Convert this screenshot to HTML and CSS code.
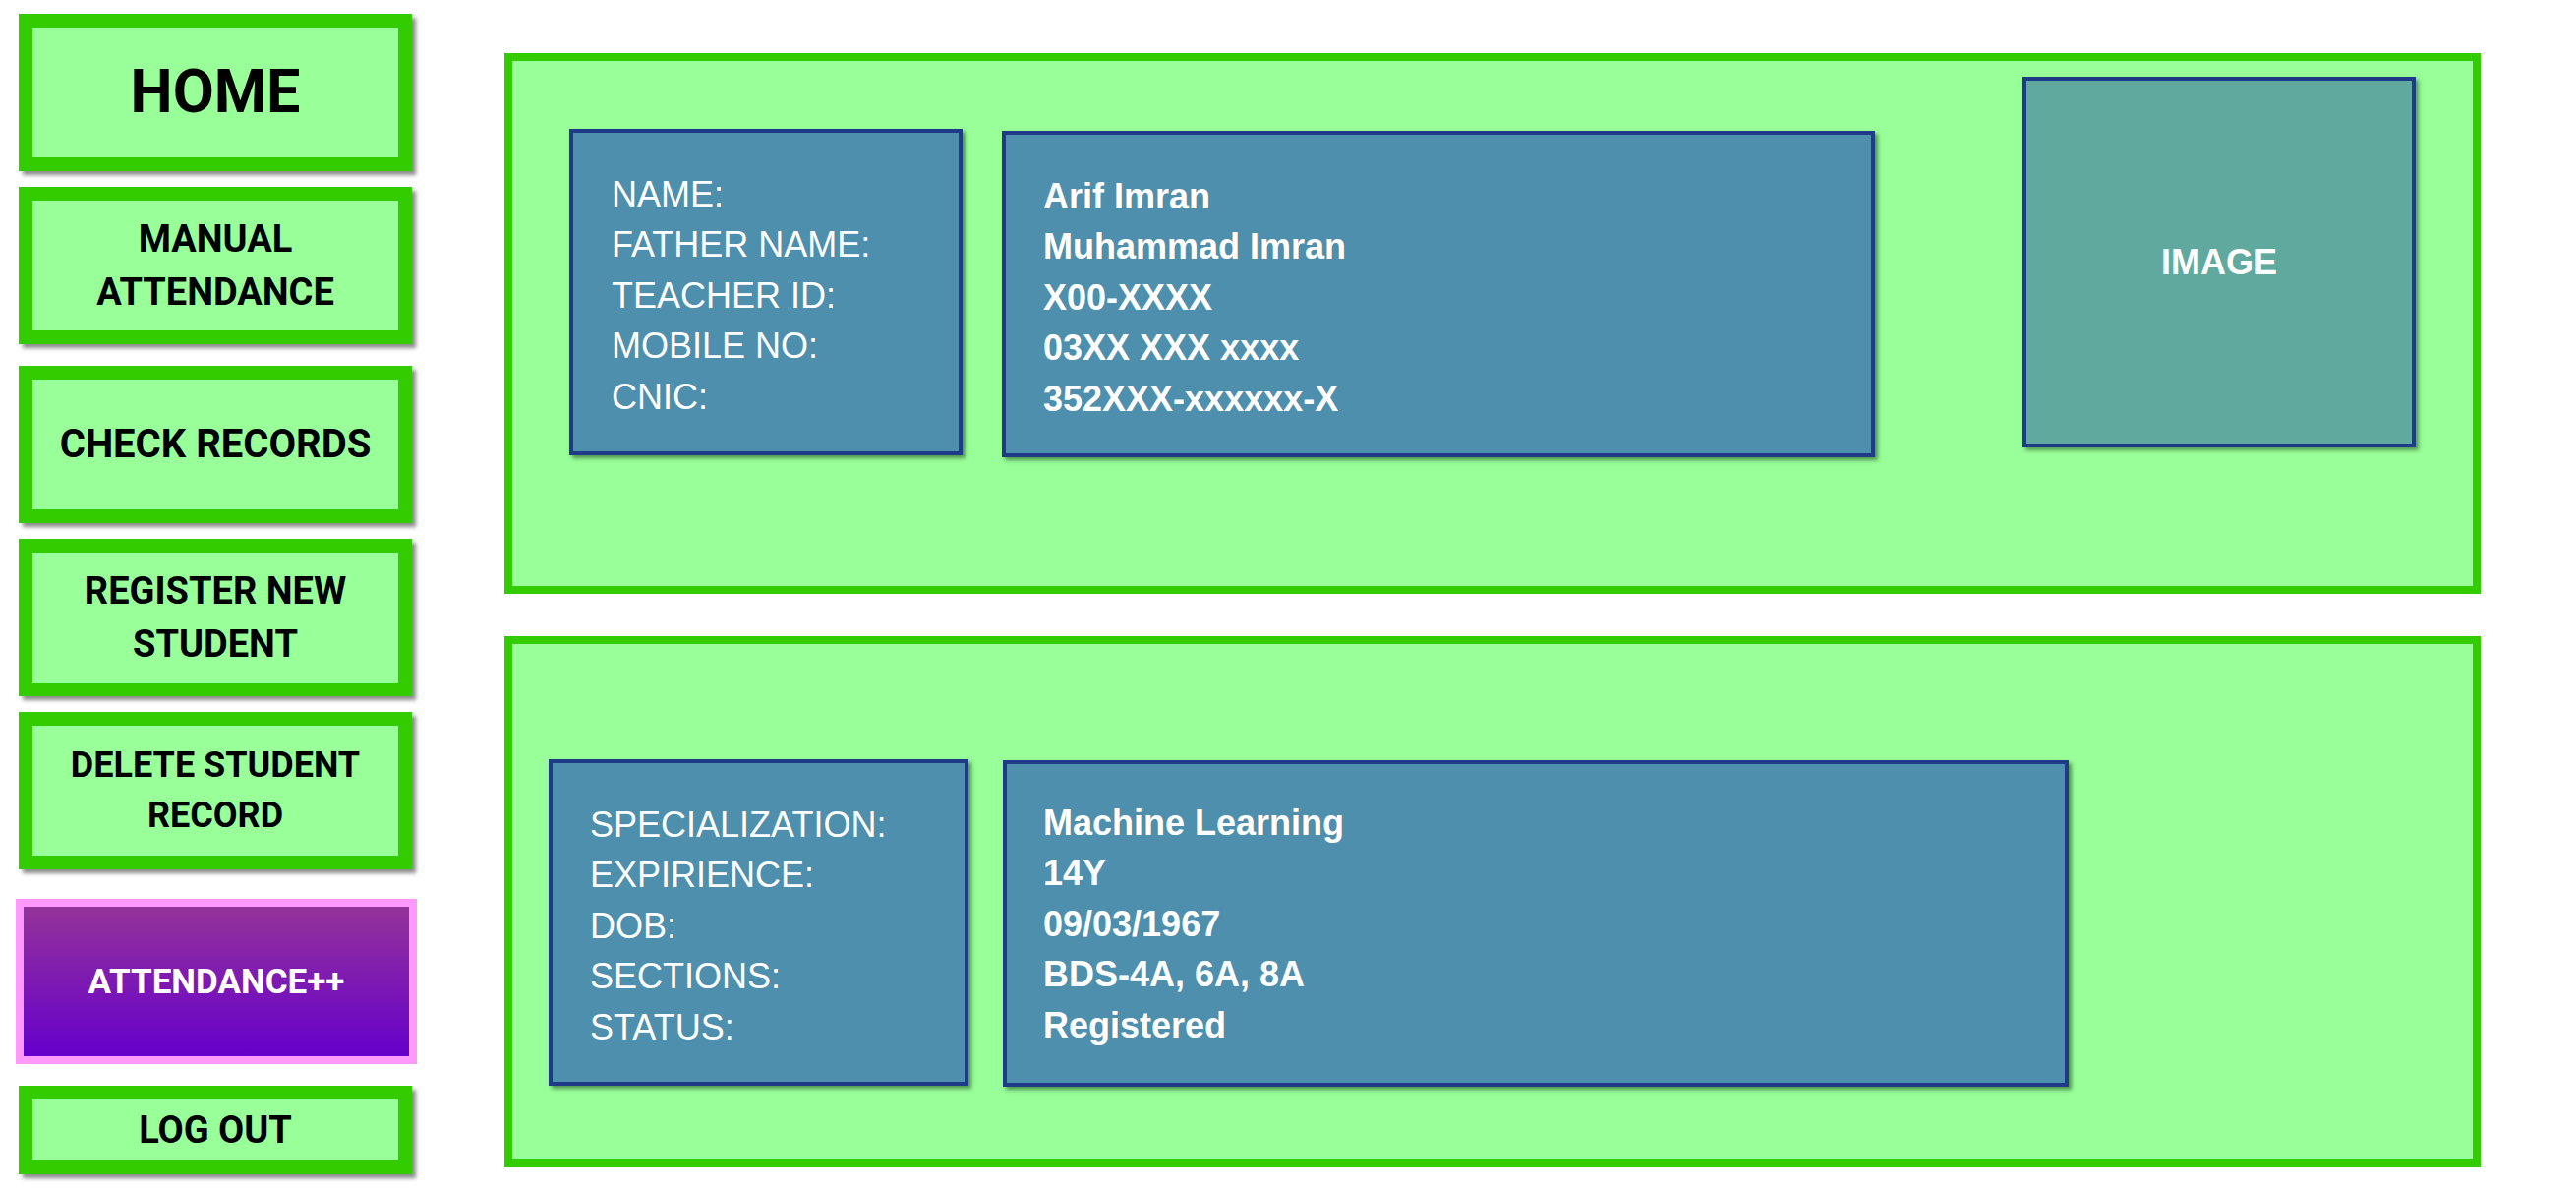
FILE: index.html
```html
<!DOCTYPE html>
<html>
<head>
<meta charset="utf-8">
<title>Teacher Profile</title>
<link rel="stylesheet" href="styles.css">
</head>
<body>
<div class="app">
  <nav class="sidebar">
    <div class="nav-btn btn-home">HOME</div>
    <div class="nav-btn btn-manual">MANUAL<br>ATTENDANCE</div>
    <div class="nav-btn btn-check">CHECK RECORDS</div>
    <div class="nav-btn btn-register">REGISTER NEW<br>STUDENT</div>
    <div class="nav-btn btn-delete">DELETE STUDENT<br>RECORD</div>
    <div class="brand-btn">ATTENDANCE++</div>
    <div class="nav-btn btn-logout">LOG OUT</div>
  </nav>
  <main class="main">
    <section class="panel panel-top">
      <div class="info-box labels labels-top">
        <div>NAME:</div>
        <div>FATHER NAME:</div>
        <div>TEACHER ID:</div>
        <div>MOBILE NO:</div>
        <div>CNIC:</div>
      </div>
      <div class="info-box values values-top">
        <div>Arif Imran</div>
        <div>Muhammad Imran</div>
        <div>X00-XXXX</div>
        <div>03XX XXX xxxx</div>
        <div>352XXX-xxxxxx-X</div>
      </div>
      <div class="image-box">IMAGE</div>
    </section>
    <section class="panel panel-bottom">
      <div class="info-box labels labels-bottom">
        <div>SPECIALIZATION:</div>
        <div>EXPIRIENCE:</div>
        <div>DOB:</div>
        <div>SECTIONS:</div>
        <div>STATUS:</div>
      </div>
      <div class="info-box values values-bottom">
        <div>Machine Learning</div>
        <div>14Y</div>
        <div>09/03/1967</div>
        <div>BDS-4A, 6A, 8A</div>
        <div>Registered</div>
      </div>
    </section>
  </main>
</div>
</body>
</html>
```

FILE: styles.css
```css
* { box-sizing: border-box; }

html, body {
  margin: 0;
  padding: 0;
  background: #ffffff;
}

.app {
  display: flex;
  flex-direction: row;
  align-items: flex-start;
  width: 2620px;
  height: 1208px;
  overflow: hidden;
}

.sidebar {
  display: flex;
  flex-direction: column;
  padding-left: 19px;
  padding-top: 14px;
  width: 419px;
  flex: none;
}

.nav-btn {
  width: 400px;
  height: 160px;
  border: 14px solid #33cc00;
  background: #99ff99;
  box-shadow: 4px 4px 4px rgba(0, 0, 0, 0.45);
  display: flex;
  align-items: center;
  justify-content: center;
  text-align: center;
  font-family: Roboto, "Liberation Sans", sans-serif;
  font-weight: 700;
  color: #000000;
  font-size: 38px;
  line-height: 54px;
}

.btn-home { font-size: 61px; padding-bottom: 2px; }
.btn-manual { margin-top: 16px; }
.btn-check { margin-top: 22px; font-size: 40px; }
.btn-register { margin-top: 16px; }
.btn-delete { margin-top: 16px; line-height: 51px; font-size: 36px; }
.btn-logout { margin-top: 22px; height: 90px; font-size: 38px; }

.brand-btn {
  margin-top: 30px;
  margin-left: -3px;
  width: 408px;
  height: 168px;
  border: 8px solid #ff99ff;
  background: linear-gradient(to bottom, #943399, #6600cc);
  display: flex;
  align-items: center;
  justify-content: center;
  font-family: Roboto, "Liberation Sans", sans-serif;
  font-weight: 700;
  font-size: 35px;
  color: #ffffff;
}

.main {
  display: flex;
  flex-direction: column;
  margin-left: 94px;
  padding-top: 54px;
}

.panel {
  width: 2010px;
  border: 8px solid #33cc00;
  background: #99ff99;
  display: flex;
  flex-direction: row;
  align-items: flex-start;
}

.panel-top {
  height: 550px;
  padding-left: 58px;
}

.panel-bottom {
  height: 540px;
  margin-top: 43px;
  padding-left: 37px;
}

.info-box {
  height: 332px;
  border: 4px solid #1f3a86;
  background: #4d8fad;
  box-shadow: 3px 3px 4px rgba(20, 60, 20, 0.55);
  color: #ffffff;
  font-family: "Liberation Sans", Arial, sans-serif;
  font-size: 36px;
  line-height: 51.4px;
  padding-top: 37px;
  padding-left: 39px;
}

.values { font-weight: 700; }

.labels-top { width: 400px; margin-top: 69px; }
.values-top { width: 888px; margin-top: 71px; margin-left: 40px; padding-left: 38px; }

.labels-bottom { width: 427px; margin-top: 117px; padding-left: 38px; }
.values-bottom { width: 1084px; margin-top: 118px; margin-left: 35px; padding-top: 34px; padding-left: 37px; }

.image-box {
  width: 400px;
  height: 377px;
  margin-top: 16px;
  margin-left: 150px;
  border: 4px solid #1f3a86;
  background: #60a99f;
  box-shadow: 3px 3px 4px rgba(20, 60, 20, 0.5);
  display: flex;
  align-items: center;
  justify-content: center;
  color: #ffffff;
  font-family: "Liberation Sans", Arial, sans-serif;
  font-weight: 700;
  font-size: 36px;
}
```
